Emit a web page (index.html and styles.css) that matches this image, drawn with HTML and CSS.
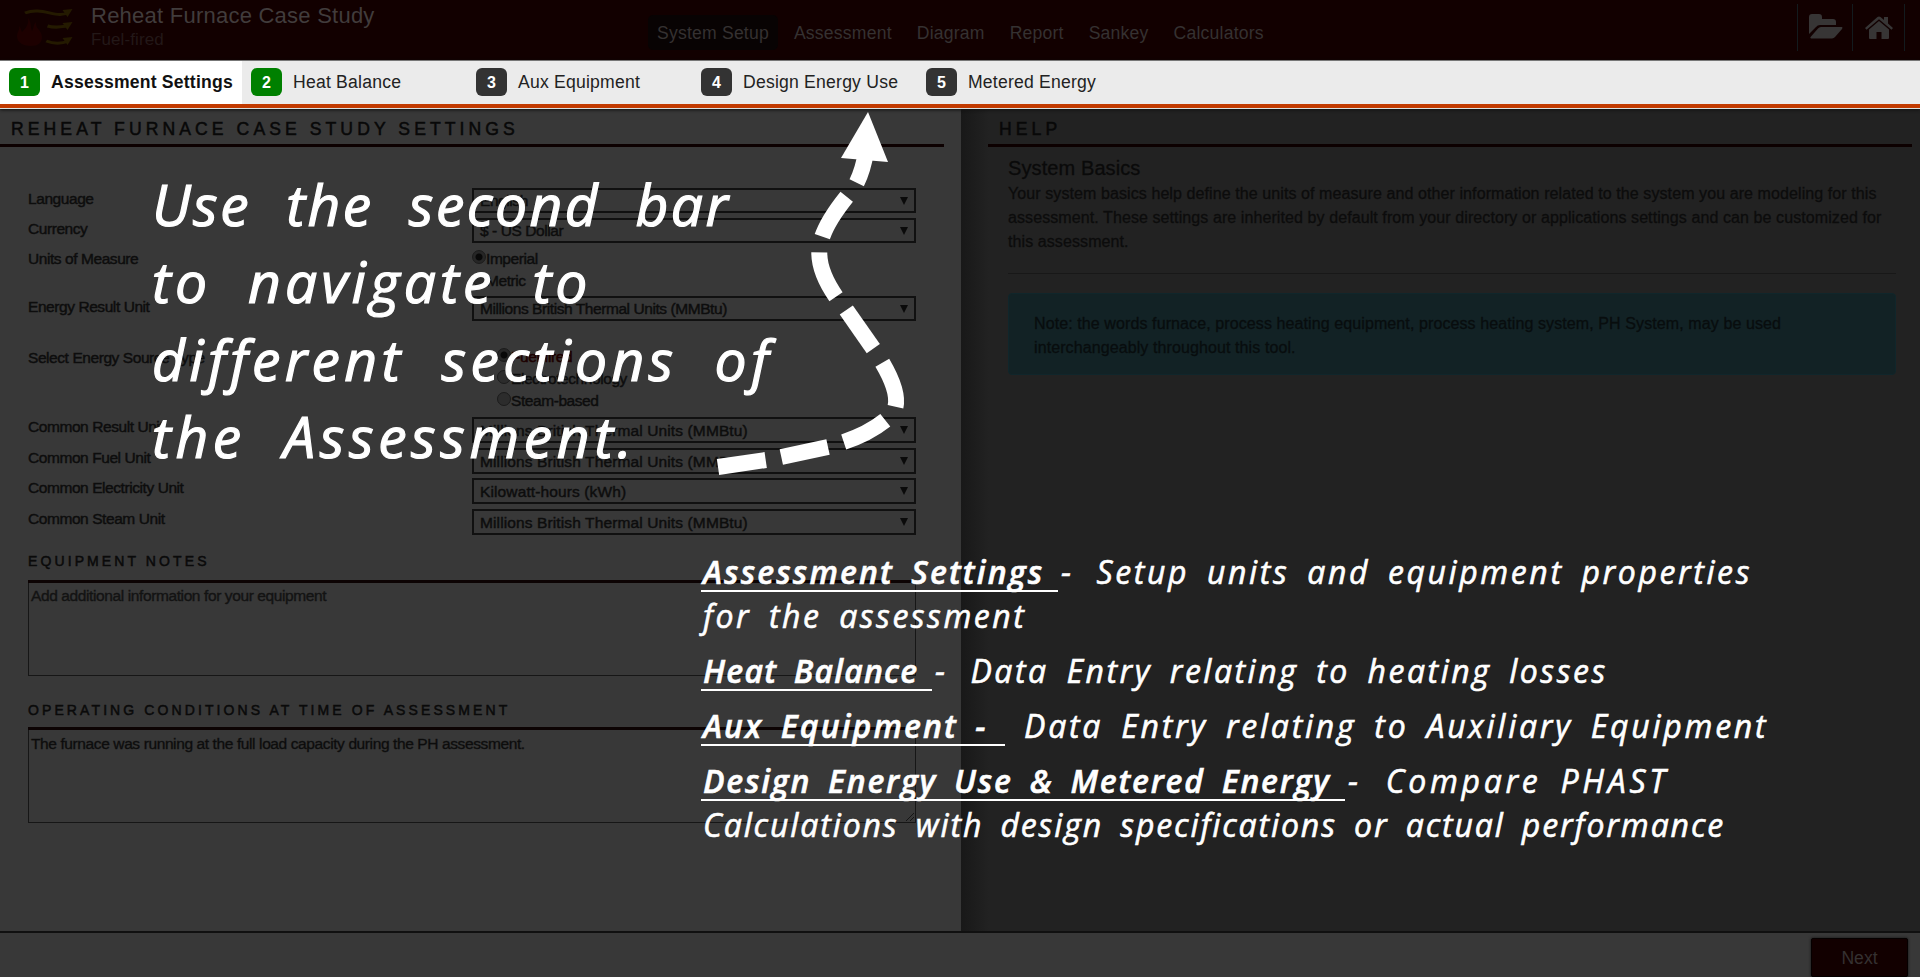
FILE: index.html
```html
<!DOCTYPE html>
<html lang="en">
<head>
<meta charset="utf-8">
<title>Reheat Furnace Case Study</title>
<link rel="stylesheet" href="styles.css">
</head>
<body>
<div class="app">
  <header class="header">
    <div class="brand">
      <svg class="logo" width="56" height="48" viewBox="0 0 56 48">
        <path class="flame" d="M9 11c4 5 2 9 4 13 2-3 1-6 4-9-1 7 6 8 6 15 0 6-4 9-11 9S-2 36-2 29c0-4 3-6 2-10 2 2 2 4 3 6 4-4 7-8 6-14z"/>
        <g class="flow">
          <path d="M4 6C18-1 30 13 39 5"/><path d="M22 19c6 2 10 1 17 0"/><path d="M21 34c6 3 12 3 18 0"/>
        </g>
        <g class="flow-heads"><path d="M34 3l8-1-4 8zM34 16l8-1-4 8zM34 31l8-1-4 8z"/></g>
      </svg>
      <div class="titles">
        <h1 class="title">Reheat Furnace Case Study</h1>
        <div class="subtitle">Fuel-fired</div>
      </div>
    </div>
    <nav class="nav">
      <a class="nav-item active">System Setup</a>
      <a class="nav-item">Assessment</a>
      <a class="nav-item">Diagram</a>
      <a class="nav-item">Report</a>
      <a class="nav-item">Sankey</a>
      <a class="nav-item">Calculators</a>
    </nav>
    <div class="tools">
      <span class="tool folder"><svg width="34" height="26" viewBox="0 0 34 26"><path d="M0 20V3a3 3 0 0 1 3-3h7a3 3 0 0 1 3 3v2h11a3 3 0 0 1 3 3v3H11a5 5 0 0 0-4 2z"/><path d="M12 13h21q1 .5 0 2l-7 8a4 4 0 0 1-3 1.500H2q-1.500-.5 0-2l7-8a4 4 0 0 1 3-1.500z"/></svg></span>
      <span class="tool home"><svg width="28" height="24" viewBox="0 0 28 24"><path d="M14 5l10 8.500V22q0 1-1 1h-6.500v-7h-5v7H5q-1 0-1-1v-8.500z"/><path d="M0 12L12.500 1q1.500-1 3 0L19 4V1h4v6.500L28 12l-1.500 1.700L14 3.300 1.500 13.700z"/></svg></span>
    </div>
  </header>

  <div class="tabs">
    <div class="tab current"><span class="badge done">1</span><span class="tab-label">Assessment Settings</span></div>
    <div class="tab"><span class="badge done">2</span><span class="tab-label">Heat Balance</span></div>
    <div class="tab"><span class="badge">3</span><span class="tab-label">Aux Equipment</span></div>
    <div class="tab"><span class="badge">4</span><span class="tab-label">Design Energy Use</span></div>
    <div class="tab"><span class="badge">5</span><span class="tab-label">Metered Energy</span></div>
  </div>

  <div class="panels">
    <main class="settings">
      <h2 class="panel-title">Reheat Furnace Case Study Settings</h2>
      <div class="form">
        <div class="row"><label>Language</label><div class="select">English</div></div>
        <div class="row"><label>Currency</label><div class="select">$ - US Dollar</div></div>
        <div class="row units"><label>Units of Measure</label>
          <div class="radios"><div class="option"><i class="radio on"></i>Imperial</div><div class="option"><i class="radio"></i>Metric</div></div>
        </div>
        <div class="row result"><label>Energy Result Unit</label><div class="select">Millions British Thermal Units (MMBtu)</div></div>
        <div class="row source"><label>Select Energy Source Type</label>
          <div class="radios inset"><div class="option red"><i class="radio on"></i>Fuel-fired</div><div class="option"><i class="radio"></i>Electrotechnology</div><div class="option"><i class="radio"></i>Steam-based</div></div>
        </div>
        <div class="row common"><label>Common Result Unit</label><div class="select wide">Millions British Thermal Units (MMBtu)</div></div>
        <div class="row common"><label>Common Fuel Unit</label><div class="select wide">Millions British Thermal Units (MMBtu)</div></div>
        <div class="row common"><label>Common Electricity Unit</label><div class="select wide">Kilowatt-hours (kWh)</div></div>
        <div class="row common"><label>Common Steam Unit</label><div class="select wide">Millions British Thermal Units (MMBtu)</div></div>
      </div>
      <section class="notes">
        <h3 class="notes-title">Equipment Notes</h3>
        <div class="notes-box">Add additional information for your equipment</div>
      </section>
      <section class="notes second">
        <h3 class="notes-title">Operating Conditions at Time of Assessment</h3>
        <div class="notes-box dark">The furnace was running at the full load capacity during the PH assessment.
          <svg class="grip" width="8" height="8" viewBox="0 0 8 8"><path d="M0 8L8 0M4 8L8 4"/></svg></div>
      </section>
    </main>
    <aside class="help">
      <h2 class="panel-title help-title">Help</h2>
      <div class="help-body">
        <h3 class="help-heading">System Basics</h3>
        <p class="help-text">Your system basics help define the units of measure and other information related to the system you are modeling for this<br>assessment. These settings are inherited by default from your directory or applications settings and can be customized for<br>this assessment.</p>
        <p class="callout">Note: the words furnace, process heating equipment, process heating system, PH System, may be used<br>interchangeably throughout this tool.</p>
      </div>
    </aside>
  </div>
  <footer class="footer"><div class="next">Next</div></footer>

  <div class="tour">
    <svg class="arrow" width="1920" height="977" viewBox="0 0 1920 977">
      <path class="head" d="M868 112L888 162L841 158Z"/>
      <g class="dash">
        <path d="M718 467L765.700 460"/><path d="M781.300 457L828 447"/>
        <path d="M843.700 442Q868 434 885.300 420.300"/><path d="M895.500 406.700Q899 391 882.300 362.700"/>
        <path d="M873.300 348.700L846.300 310"/><path d="M836 296.700Q819 272 819.300 252.300"/>
        <path d="M822.300 236.700Q828 220 846.700 196.700"/><path d="M856.700 182.700Q863 170 866 152"/>
      </g>
    </svg>
    <div class="tour-lead">
      <div class="l1">Use the second bar</div>
      <div class="l2">to navigate to</div>
      <div class="l3">different sections of</div>
      <div class="l4">the Assessment.</div>
    </div>
    <div class="tour-list">
      <p><b class="term t1">Assessment Settings</b><span class="d1"><span class="hyphen">-</span> Setup units and equipment properties</span><br><span class="d2">for the assessment</span></p>
      <p><b class="term t2">Heat Balance</b><span class="d3"><span class="hyphen">-</span> Data Entry relating to heating losses</span></p>
      <p><b class="term t3">Aux Equipment -</b><span class="d4">Data Entry relating to Auxiliary Equipment</span></p>
      <p><b class="term t4">Design Energy Use &amp; Metered Energy</b><span class="d5"><span class="hyphen">-</span> Compare PHAST</span><br><span class="d6">Calculations with design specifications or actual performance</span></p>
    </div>
  </div>
</div>
</body>
</html>
```
FILE: styles.css
```css
* { box-sizing: border-box; }
body { margin: 0; font-family: "Liberation Sans", Arial, sans-serif; background: #383838; }
h1, h2, h3, p { margin: 0; font-weight: normal; }
.app { position: relative; width: 1920px; height: 977px; overflow: hidden; display: flex; flex-direction: column; }

.header { display: flex; height: 60px; background: #120000; color: #353131; }
.brand { display: flex; width: 648px; }
.logo { margin: 7px 11px 0 24px; width: 56px; overflow: visible; }
.flame { fill: #1d0000; }
.flow { fill: none; stroke: #241a00; stroke-width: 3; transform: translateX(-1px); }
.flow-heads { fill: #241a00; transform: translateX(-1px); }
.logo path { transform-origin: 0 0; }
.logo g { transform: translateX(-4px) scaleX(1.25); }
.logo .flame { transform: translateX(-5px); }
.title { font-size: 22px; line-height: 26px; margin-top: 3px; letter-spacing: 0.24px; color: #413c3c; }
.subtitle { font-size: 17px; line-height: 20px; margin-top: -1px; letter-spacing: 0.1px; color: #231818; padding-top: 2px; }
.nav { display: flex; padding-top: 15px; }
.nav-item { height: 35px; line-height: 36px; font-size: 17.6px; padding: 0 9px; margin-right: 7px; border-radius: 5px; letter-spacing: 0.2px; }
.nav-item.active { background: #080303; }
.tools { display: flex; margin: 4px 15px 0 auto; height: 47px; border-left: 1px solid #131b1e; }
.tool { border-right: 1px solid #131b1e; fill: #373535; }
.folder { width: 55px; padding: 10px 0 0 11px; }
.home { width: 52px; padding: 12px 0 0 12px; }

.tabs { display: flex; height: 49px; background: #ebebeb; border-top: 1px solid #777; border-bottom: 1px solid #d8e0df; position: relative; box-shadow: 0 1px 3px #111; }
.tabs::after { content: ""; position: absolute; left: 0; right: 0; bottom: 0; height: 4px; background: #c23a00; }
.tab { display: flex; width: 225px; height: 44px; padding: 7px 0 0 9px; font-size: 17.6px; color: #222; white-space: nowrap; letter-spacing: 0.21px; }
.tab.current { width: 242px; background: #fff; color: #111; font-weight: bold; }
.badge { width: 31px; height: 28px; border-radius: 6px; background: #333; color: #fff; font-weight: bold; font-size: 16px; line-height: 29px; text-align: center; }
.badge.done { background: #008000; }
.tab-label { margin-left: 11px; line-height: 28px; }

.panels { display: flex; height: 822px; }
.settings { width: 961px; background: #383838; color: #0d0d0d; }
.panel-title { font-size: 17.6px; line-height: 20px; text-transform: uppercase; letter-spacing: 4.07px; padding: 10px 0 5px 11px; width: 944px; height: 38px; border-bottom: 3px solid #0c0000; color: #080808; -webkit-text-stroke: 0.5px #080808; }
.form { padding: 41px 45px 0 28px; font-size: 15.5px; letter-spacing: -0.43px; -webkit-text-stroke: 0.45px #0d0d0d; }
.row { display: flex; height: 30px; }
.row label { width: 444px; line-height: 21px; }
.row.units { height: 48px; }
.row.result { height: 50px; }
.row.source { height: 71px; }
.row.common { height: 30.7px; }
.row.common label { line-height: 20px; }
.select { position: relative; width: 444px; height: 25px; border: 2px solid #101010; line-height: 21px; padding-left: 6px; }
.select.wide { height: 26px; letter-spacing: 0.12px; line-height: 23px; }
.select::after { content: ""; position: absolute; right: 6px; top: 7px; border: 4px solid transparent; border-top: 8px solid #0a0a0a; border-bottom: 0; }
.option { display: flex; height: 22px; line-height: 21px; }
.radios.inset { padding: 0 0 0 25px; }
.result label { line-height: 22px; }
.source label { line-height: 23px; }
.red { color: #1c0000; -webkit-text-stroke-color: #1c0000; }
.radio { width: 14px; height: 14px; margin: 2px 0 0; border: 1px solid #1b1b1b; border-radius: 50%; background: #2c2c2c; }
.radio.on { background: radial-gradient(circle, #080808 0 3px, #262626 4px); }

.notes { margin: 13.2px 45px 0 28px; }
.notes.second { margin-top: 24px; }
.notes-title { font-size: 14px; line-height: 16px; height: 30px; text-transform: uppercase; letter-spacing: 3.1px; border-bottom: 3px solid #0c0303; color: #0a0a0a; -webkit-text-stroke: 0.5px #0a0a0a; }
.second .notes-title { padding-top: 2px; }
.notes-box { position: relative; height: 93px; border: 1px solid #161616; border-top: 0; padding: 4px 2px; font-size: 15.5px; line-height: 17px; letter-spacing: -0.39px; color: #131313; -webkit-text-stroke: 0.4px #131313; }
.notes-box.dark { color: #0a0a0a; padding-top: 5px; }
.grip { position: absolute; right: 1px; bottom: 1px; stroke: #151515; }

.help { flex: 1; background: linear-gradient(90deg, #181818, #222 28px); color: #0a0a0a; padding-left: 27px; }
.help-title { width: 924px; }
.help-body { padding: 10px 24px 0 20px; }
.help-heading { font-size: 20px; line-height: 23px; height: 25px; letter-spacing: 0.1px; -webkit-text-stroke: 0.3px #0a0a0a; }
.help-text { font-size: 16px; line-height: 24px; height: 92px; border-bottom: 1px solid #181818; white-space: nowrap; color: #0c0c0c; letter-spacing: 0.09px; -webkit-text-stroke: 0.3px #0c0c0c; }
.callout { margin-top: 19px; height: 82px; padding: 18px 25px; font-size: 16px; line-height: 24px; background: #122225; border: 1px solid #10262b; border-radius: 4px; color: #080d0e; white-space: nowrap; letter-spacing: 0.1px; -webkit-text-stroke: 0.3px #080d0e; }

.footer { height: 46px; border-top: 2px solid #101010; background: #383838; display: flex; justify-content: flex-end; padding: 5px 12px 0 0; }
.next { width: 97px; height: 39px; background: #120000; border: 1px solid #050000; box-shadow: 0 0 3px #111; border-radius: 2px; text-align: center; color: #353131; font-size: 17.6px; line-height: 39px; }

.tour { position: absolute; inset: 0; color: #fff; font-family: "Open Sans", "Noto Sans", sans-serif; font-style: italic; white-space: nowrap; }
.arrow { position: absolute; left: 0; top: 0; }
.head { fill: #fff; }
.dash { fill: none; stroke: #fff; stroke-width: 16; }
.tour-lead { position: absolute; left: 152px; top: 166px; font-size: 57px; line-height: 77.300px; font-weight: 500; word-spacing: 18px; -webkit-text-stroke: 1.2px #fff; }
.l1 { letter-spacing: 2.450px; }
.l2 { letter-spacing: 4.100px; }
.l3 { letter-spacing: 4.300px; }
.l4 { letter-spacing: 4.600px; }
.tour-list { position: absolute; left: 701px; top: 550px; font-size: 32px; line-height: 44px; word-spacing: 7px; letter-spacing: 2.600px; -webkit-text-stroke: 0.6px #fff; }
.tour-list p { margin-bottom: 11px; }
.term { display: inline-block; height: 42px; border-bottom: 2px solid #fff; padding-left: 2px; vertical-align: top; font-weight: 600; letter-spacing: 2.100px; }
.hyphen { margin: 0 5px 0 3px; }
.t1 { width: 357px; }
.t2 { width: 231px; letter-spacing: 1.200px; }
.t3 { width: 304px; }
.t4 { width: 644px; letter-spacing: 1.750px; }
.d2 { margin-left: 2px; letter-spacing: 2.500px; }
.d3 { letter-spacing: 2.520px; }
.d4 { margin-left: 19px; letter-spacing: 2.750px; }
.d5 { letter-spacing: 3.700px; }
.d6 { margin-left: 2px; letter-spacing: 1.880px; }
```
